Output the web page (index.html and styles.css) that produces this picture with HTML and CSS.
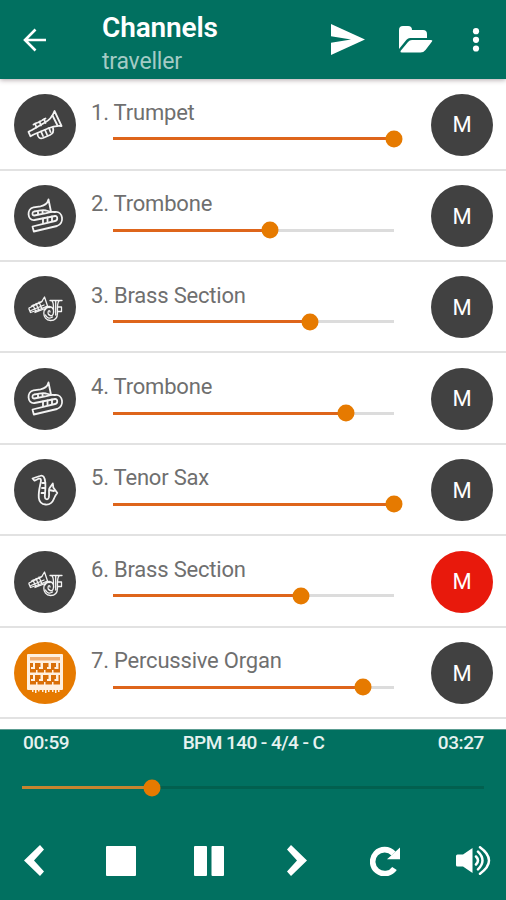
FILE: index.html
```html
<!DOCTYPE html>
<html lang="en">
<head>
<meta charset="utf-8">
<title>Channels</title>
<link rel="stylesheet" href="styles.css">
</head>
<body>
<svg class="symbols" aria-hidden="true">
  <symbol id="trumpet" viewBox="0 0 62 62">
    <path d="M14.500 37.800l2 4.500 3.200-1.800 13-5.500c4-1.800 8-4 14.800-3L40.500 17c-2.500 7-5.500 9.500-10 11.700L18 36z"/>
    <path d="M21 29.500l1.500 4M25.500 27.500l1.500 4M30 25l1.500 4M19.500 30.500l3-1.500M24 28.500l3-1.500M28.500 26l3-1.500"/>
    <path d="M23.500 39.500c0 4 2.500 5.500 5.500 4.500l7-3c3-1.500 4-3.500 3-7M27 37.500l2 4.500M31 36l2 4.500M35 34l1.500 4"/>
    <path d="M38.500 21.500l5 10"/>
  </symbol>
  <symbol id="trombone" viewBox="0 0 62 62">
    <path d="M34.500 14.500c-1 4-3.500 6-8 6.800l-7 1C12.500 23.500 13 36 20.500 35l20.500-4c3-.3 3 4.300 0 5L18.500 41.500l1.300 5L43 41c8-2.500 6-15-2-14l-4-.2z"/>
    <path d="M37 26.800l-5-1.300c-3-.7-5-.2-8 .3l-4 .7c-2.200.6-2 4 .3 4l12-2.300 5-1.400M24 26v3M28.500 25.500v3M29 33.500v4.500M33.500 32.500V37M38 31.500V36"/>
  </symbol>
  <symbol id="brass" viewBox="0 0 62 62">
    <g class="fine">
      <path d="M15 33l1.500 3.500 10-3.500 7-3-3-9-3 5-12.500 6zM19 29l3 7M22 27.500l3 7M25 26l3 7M17.500 30l11-5M17 34.500l13-5.500M21 36.500l9-3.500"/>
      <path d="M36 24.500h12M38 25c2 2 1.500 5 1.500 11 0 4-3 4.500-4.500 2.500M45 25c-2 2-1.500 6-1.500 12 0 5-2.500 7.500-7 7.500-9 0-8.500-15-1-14 4 .5 5 5 3.500 8-1 2-5 1.500-5-1.500s2-3 2-1M41.700 25v14M44 31h3.500v4.500H44M31 34c1-2 2-3 5-2.500M31.500 39c1 3 4 4 7 2"/>
    </g>
  </symbol>
  <symbol id="sax" viewBox="0 0 62 62">
    <path d="M18.500 19.500l2 2.200 4-2c2.500-.7 2.800 1 2.300 3.300-1 5-2.600 10-2 16 1 8 12 9 15 1 1.500-3 1-3 3.500-6l-4-5.500-.5-4-3.500 5c-1 3 .5 5-.5 9-1 3-4 2-4-1 .3-5 1-9 .5-14-.5-5-2-8-5.500-6.500l-4.500 1.500zM28.500 24h3M28 29h3M27.500 34h3M35 31l5 1"/>
  </symbol>
  <symbol id="organ" viewBox="0 0 62 62">
    <path class="solid" d="M13 13q0-1 1-1h34q1 0 1 1v34q0 1-1 1H14q-1 0-1-1z"/>
    <path class="holes" d="M16 21h30v9.500h-30zM16 33h30v9.500h-30z"/>
    <path class="slot" d="M16 15h30v3.500H16z"/>
    <path class="solid" d="M19 21h2v6h-4v-2h2zM26.500 21h2.500v6h-4v-2h1.500zM34.500 21h2.500v6h-4v-2h1.500zM42 21h2.500v6h-4v-2H42zM19 33h2v6h-4v-2h2zM26.500 33h2.500v6h-4v-2h1.500zM34.500 33h2.500v6h-4v-2h1.500zM42 33h2.500v6h-4v-2H42zM22 28h1.500v3H22zM30 28h1.500v3H30zM38 28h1.500v3H38zM22 40h1.500v3H22zM30 40h1.500v3H30zM38 40h1.500v3H38zM18 47h1.500v3H18zM21 47h1.500v4H21zM24 47h1.500v2.500H24zM28 47h1.500v3H28zM31 47h1.500v4H31zM34 47h1.500v3H34zM38 47h1.500v3H38zM41 47h1.500v4H41zM44 47h1.500v3H44z"/>
  </symbol>
</svg>

<div class="app">
  <header class="bar">
    <svg class="back" viewBox="0 0 24 24"><path d="M23 12H2M12.500 1.500L2 12l10.500 10.500"/></svg>
    <div class="titles">
      <h1 class="title">Channels</h1>
      <p class="subtitle">traveller</p>
    </div>
    <svg class="send" viewBox="0 0 34 31"><path d="M0 0l34 15.500L0 31V18.700l20-3.200L0 12.300z"/></svg>
    <svg class="folder" viewBox="0 0 34 27"><path d="M0 23V4q0-4 4-4h5q4 0 4 4h11q4 0 4 4v4H11q-2 0-3.500 1.800z"/><path d="M1.500 25L9 16q1.500-2 4-2h19q2 0 1 1.500L26.500 24q-2 2.500-5 2.500H3q-2 0-1.500-1.500z"/></svg>
    <svg class="more" viewBox="0 0 8 24"><circle cx="4" cy="3.200" r="3.100"/><circle cx="4" cy="11.800" r="3.100"/><circle cx="4" cy="20.500" r="3.100"/></svg>
  </header>

  <main class="channels">
    <section class="row"><div class="disc"><svg><use href="#trumpet"/></svg></div><div class="channel"><h2 class="name">1. Trumpet</h2><div class="slider" style="--level:100%"><i class="thumb"></i></div></div><button class="disc mute">M</button></section>
    <section class="row"><div class="disc"><svg><use href="#trombone"/></svg></div><div class="channel"><h2 class="name">2. Trombone</h2><div class="slider" style="--level:56%"><i class="thumb"></i></div></div><button class="disc mute">M</button></section>
    <section class="row"><div class="disc"><svg><use href="#brass"/></svg></div><div class="channel"><h2 class="name">3. Brass Section</h2><div class="slider" style="--level:70%"><i class="thumb"></i></div></div><button class="disc mute">M</button></section>
    <section class="row"><div class="disc"><svg><use href="#trombone"/></svg></div><div class="channel"><h2 class="name">4. Trombone</h2><div class="slider" style="--level:83%"><i class="thumb"></i></div></div><button class="disc mute">M</button></section>
    <section class="row"><div class="disc"><svg><use href="#sax"/></svg></div><div class="channel"><h2 class="name">5. Tenor Sax</h2><div class="slider" style="--level:100%"><i class="thumb"></i></div></div><button class="disc mute">M</button></section>
    <section class="row"><div class="disc"><svg><use href="#brass"/></svg></div><div class="channel"><h2 class="name">6. Brass Section</h2><div class="slider" style="--level:67%"><i class="thumb"></i></div></div><button class="disc mute muted">M</button></section>
    <section class="row"><div class="disc active"><svg><use href="#organ"/></svg></div><div class="channel"><h2 class="name">7. Percussive Organ</h2><div class="slider" style="--level:89%"><i class="thumb"></i></div></div><button class="disc mute">M</button></section>
  </main>

  <footer class="player">
    <div class="info"><span>00:59</span><span class="tempo">BPM 140 - 4/4 - C</span><span>03:27</span></div>
    <div class="slider seek" style="--level:28.1%"><i class="thumb"></i></div>
    <div class="controls">
      <svg class="prev" viewBox="0 0 20 31"><path d="M16 0L20 4.500 10 15.500l10 11L16 31 0 15.500z"/></svg>
      <svg class="stop" viewBox="0 0 30 30"><rect width="30" height="30" rx="1"/></svg>
      <svg class="pause" viewBox="0 0 30 30"><rect width="13" height="30" rx="1"/><rect x="17.500" width="12.500" height="30" rx="1"/></svg>
      <svg class="next" viewBox="0 0 20 31"><path d="M4 0L0 4.500l10 11-10 11L4 31 20 15.500z"/></svg>
      <svg class="reload" viewBox="0 0 30 30"><path class="arc" d="M23.500 7.500A12 12 0 1 0 24.500 22.500"/><path d="M30 1.500v11.700H17z"/></svg>
      <svg class="volume" viewBox="0 0 35 29"><path d="M0 10q0-1.500 1.500-1.500H7L16.500 2v25L7 20.500H1.500Q0 20.500 0 19z"/><path class="waves" d="M20 10.500q4 4 0 8M22 5.700q9 8.800 0 17.600M24 1.300q18 13.200 0 26.400"/></svg>
    </div>
  </footer>
</div>
</body>
</html>
```
FILE: styles.css
```css
* { box-sizing: border-box; margin: 0; }

body { background: #fff; font-family: Roboto, "Liberation Sans", sans-serif; }

.symbols { display: block; width: 0; height: 0; }

.app { display: flex; flex-direction: column; width: 506px; height: 900px; overflow: hidden; }

.bar {
  display: flex;
  align-items: center;
  flex: none;
  height: 79.300px;
  padding-left: 23px;
  background: #017060;
  box-shadow: 0 1px 5px rgba(60, 30, 40, .4);
  fill: #fff;
  z-index: 1;
}
.back { width: 24px; height: 24px; fill: none; stroke: #fff; stroke-width: 2.600; }
.titles { width: 230px; padding-left: 55px; margin-top: 9px; }
.title { color: #fff; font-size: 28px; line-height: 34px; font-weight: 600; letter-spacing: -.15px; }
.subtitle { color: #a4cbc5; font-size: 23px; line-height: 33px; letter-spacing: -.2px; }
.send { width: 34px; height: 31px; margin-left: 54px; }
.folder { width: 34px; height: 27px; margin-left: 34px; }
.more { width: 8px; height: 24px; margin-left: 39px; }

.channels { flex: none; height: 649.700px; overflow: hidden; }
.row {
  display: flex;
  align-items: center;
  height: 91.400px;
  padding: 1.400px 13px 0 14px;
  border-bottom: 2px solid #e2e2e2;
}
.disc {
  display: flex;
  align-items: center;
  justify-content: center;
  flex: none;
  width: 62px;
  height: 62px;
  padding: 0;
  border: 0;
  border-radius: 50%;
  background: #414141;
  color: #fff;
}
.disc svg { width: 62px; height: 62px; fill: none; stroke: #f3f3f3; stroke-width: 1.800; stroke-linejoin: round; stroke-linecap: round; }
.fine { stroke-width: 1.300; }
.active { background: #e67a00; }
.solid { fill: #fff0e0; stroke: none; }
.holes { fill: #d96f08; stroke: none; }
.slot { fill: #efad72; stroke: none; }
.mute { font: 22px Roboto, sans-serif; }
.mute.muted { background: #e8190c; }

.channel { flex: 1; height: 89px; padding: 17.700px 37px 0 15px; }
.name { color: #6f6f6f; font-size: 22px; line-height: 30px; font-weight: 400; letter-spacing: -.2px; white-space: nowrap; }

.slider {
  position: relative;
  height: 3px;
  margin: 9.500px 0 0 22px;
  background: linear-gradient(#de651b, #de651b) 0 0 / var(--level) 100% no-repeat #dcdcdc;
}
.thumb {
  position: absolute;
  top: 50%;
  left: var(--level);
  width: 17px;
  height: 17px;
  border-radius: 50%;
  background: #e67a00;
  transform: translate(-50%, -50%);
}

.player { flex: 1; padding: 0 22px; background: #017060; border-top: 1px solid #5c9d92; color: #e6f2f0; }
.info { display: flex; justify-content: space-between; padding-left: 1px; font-size: 19px; line-height: 26px; font-weight: 500; letter-spacing: -.4px; }
.tempo { letter-spacing: -.55px; }
.seek { margin: 30.500px 0 0; background: linear-gradient(#c7842f, #c7842f) 0 0 / var(--level) 100% no-repeat #02604f; }
.controls { display: flex; align-items: center; margin: 56px -7px 0 2px; height: 31px; fill: #fff; }
.prev, .next { width: 20px; height: 31px; }
.stop, .pause, .reload { width: 30px; height: 30px; }
.stop { margin-left: 62px; }
.pause { margin-left: 58px; }
.next { margin-left: 63px; }
.reload { margin-left: 63px; }
.volume { width: 35px; height: 29px; margin-left: 56px; }
.arc { fill: none; stroke: #fff; stroke-width: 5.600; }
.waves { fill: none; stroke: #fff; stroke-width: 2.500; stroke-linecap: round; }
```
